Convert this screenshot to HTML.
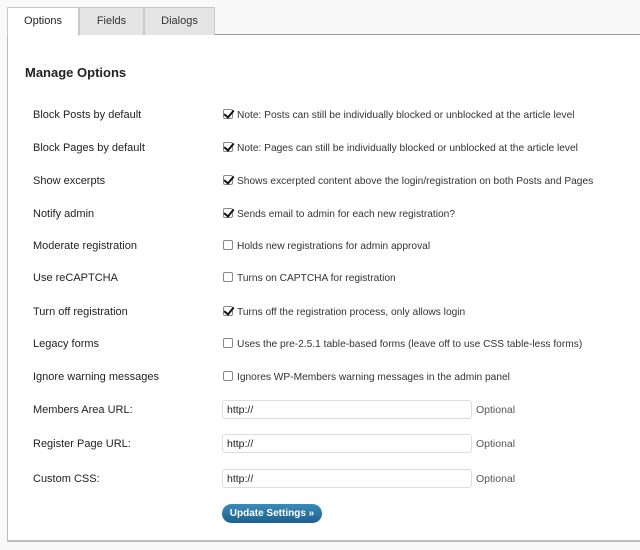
<!DOCTYPE html>
<html><head><meta charset="utf-8"><style>
*{margin:0;padding:0;box-sizing:border-box}
body{width:640px;height:550px;background:#f9f9f9;font-family:"Liberation Sans",Arial,sans-serif;color:#222;position:relative;overflow:hidden}
.tab{position:absolute;top:7px;height:28px;border:1px solid #c8c8c8;border-bottom:none;font-size:11px;text-align:center;line-height:26px;background:#e4e4e4;color:#333}
.panel{position:absolute;left:7px;top:34px;width:640px;height:508px;background:#fff;border-left:1px solid #bbb;border-top:1px solid #9a9a9a;border-bottom:2px solid #bdbdbd}
h2{position:absolute;left:25px;top:65px;font-size:13px;font-weight:bold;color:#222}
.lbl{position:absolute;left:33px;font-size:11px;color:#222}
.opt{position:absolute;left:223px;font-size:10.2px;color:#333;white-space:nowrap}
.cb{display:inline-block;width:10px;height:10px;border:1px solid #888;border-radius:2px;vertical-align:-1px;margin-right:4px;position:relative;background:#fff}
.cb.c::after{content:"";position:absolute;left:2px;top:-2px;width:4px;height:8px;border-right:2px solid #111;border-bottom:2px solid #111;transform:rotate(40deg)}
.inp{position:absolute;left:222px;width:250px;height:19px;border:1px solid #ddd;border-radius:3px;font-size:10.5px;padding:3px 4px;color:#222}
.optl{position:absolute;left:476px;font-size:10.5px;color:#555}
.btn{position:absolute;left:222px;top:504px;width:100px;height:19px;border-radius:10px;background:linear-gradient(#3b8cb8,#1c5f8e);color:#fff;font-size:10px;font-weight:bold;text-align:center;line-height:19px}
</style></head><body>
<div class="panel"></div>
<div class="tab" style="left:7px;width:72px;background:#fff;height:29px;color:#222">Options</div>
<div class="tab" style="left:79px;width:65px">Fields</div>
<div class="tab" style="left:144px;width:71px">Dialogs</div>
<h2>Manage Options</h2>

<div class="lbl" style="top:109px">Block Posts by default</div>
<div class="opt" style="top:109px"><span class="cb c"></span>Note: Posts can still be individually blocked or unblocked at the article level</div>
<div class="lbl" style="top:142px">Block Pages by default</div>
<div class="opt" style="top:142px"><span class="cb c"></span>Note: Pages can still be individually blocked or unblocked at the article level</div>
<div class="lbl" style="top:175px">Show excerpts</div>
<div class="opt" style="top:175px"><span class="cb c"></span>Shows excerpted content above the login/registration on both Posts and Pages</div>
<div class="lbl" style="top:208px">Notify admin</div>
<div class="opt" style="top:208px"><span class="cb c"></span>Sends email to admin for each new registration?</div>
<div class="lbl" style="top:240px">Moderate registration</div>
<div class="opt" style="top:240px"><span class="cb"></span>Holds new registrations for admin approval</div>
<div class="lbl" style="top:272px">Use reCAPTCHA</div>
<div class="opt" style="top:272px"><span class="cb"></span>Turns on CAPTCHA for registration</div>
<div class="lbl" style="top:306px">Turn off registration</div>
<div class="opt" style="top:306px"><span class="cb c"></span>Turns off the registration process, only allows login</div>
<div class="lbl" style="top:338px">Legacy forms</div>
<div class="opt" style="top:338px"><span class="cb"></span>Uses the pre-2.5.1 table-based forms (leave off to use CSS table-less forms)</div>
<div class="lbl" style="top:371px">Ignore warning messages</div>
<div class="opt" style="top:371px"><span class="cb"></span>Ignores WP-Members warning messages in the admin panel</div>

<div class="lbl" style="top:404px">Members Area URL:</div>
<div class="inp" style="top:400px">http://</div><div class="optl" style="top:404px">Optional</div>
<div class="lbl" style="top:438px">Register Page URL:</div>
<div class="inp" style="top:434px">http://</div><div class="optl" style="top:438px">Optional</div>
<div class="lbl" style="top:473px">Custom CSS:</div>
<div class="inp" style="top:469px">http://</div><div class="optl" style="top:473px">Optional</div>
<div class="btn">Update Settings »</div>
</body></html>
